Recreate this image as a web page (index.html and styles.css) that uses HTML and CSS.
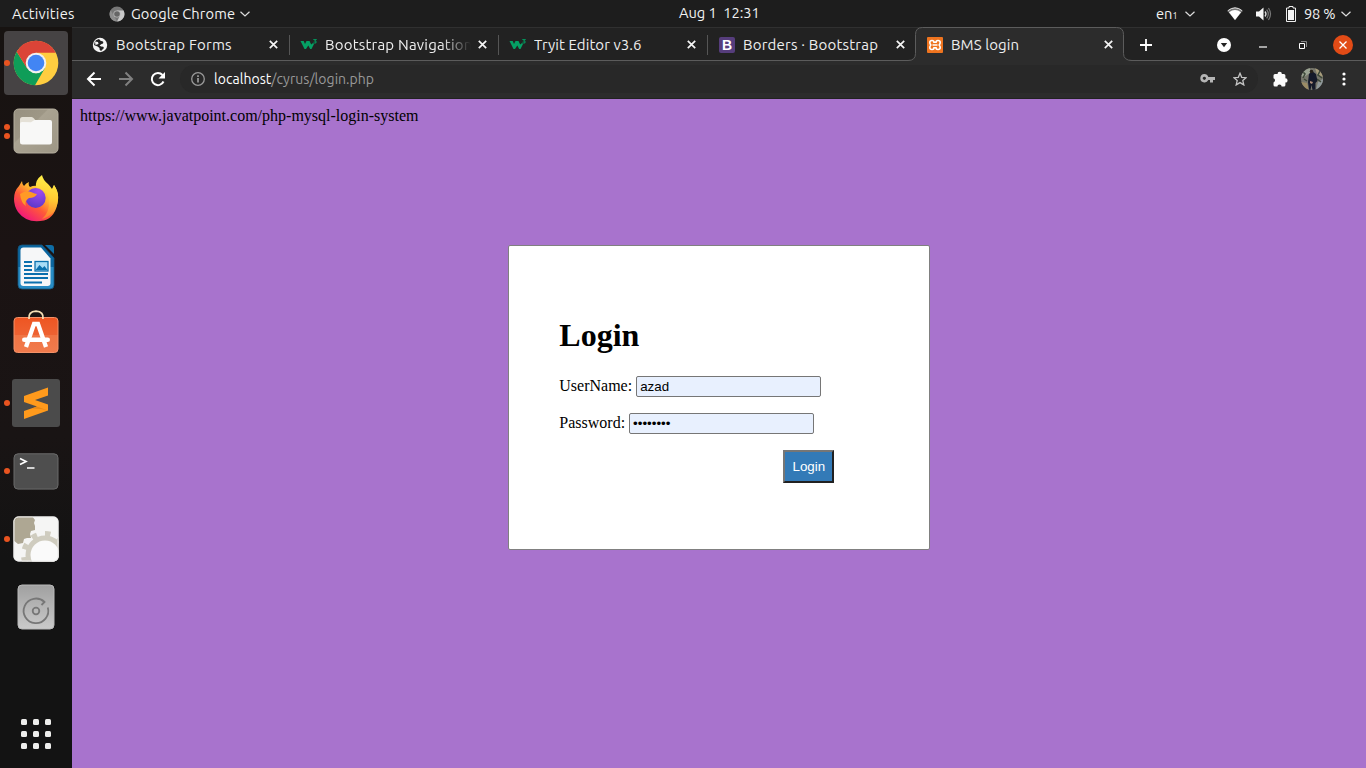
FILE: index.html
```html
<!DOCTYPE html>
<html lang="en">
<head>
<meta charset="utf-8">
<title>BMS login</title>
<link rel="stylesheet" href="styles.css">
</head>
<body>
<header class="topbar">
  <span class="activities">Activities</span>
  <svg class="app-icon" width="16" height="16" viewBox="0 0 16 16"><circle cx="8" cy="8" r="7.500" fill="#777"/><path d="M8 4.500h6.600A7.500 7.500 0 0 1 8 15.500l3-6z" fill="#c9c9c9"/><path d="M1.600 4.200 5 10l3 5.500A7.500 7.500 0 0 1 1.600 4.200z" fill="#8e8e8e"/><circle cx="8" cy="8" r="3.600" fill="#bbb"/><circle cx="8" cy="8" r="2.800" fill="#666"/></svg>
  <span class="app-name">Google Chrome</span>
  <svg class="chev" width="10" height="6" viewBox="0 0 10 6"><path d="M.5.700 5 5 9.500.7" fill="none" stroke="#ddd" stroke-width="1.200"/></svg>
  <span class="clock">Aug 1&nbsp; 12:31</span>
  <span class="lang">en<small>1</small></span>
  <svg class="chev chev-lang" width="10" height="6" viewBox="0 0 10 6"><path d="M.5.700 5 5 9.500.7" fill="none" stroke="#ddd" stroke-width="1.200"/></svg>
  <svg class="wifi" width="16" height="14" viewBox="0 0 16 14"><path d="M.5 4Q8-2.500 15.500 4L8 13.300z" fill="#777"/><path d="M2 5.300Q8 .8 14 5.300L8 13z" fill="#fff"/><path d="M.7 3.800Q8-2.200 15.300 3.800" stroke="#e8e8e8" fill="none"/></svg>
  <svg class="volume" width="16" height="14" viewBox="0 0 16 14"><path d="M0 4.500h3L7.500.5v13L3 9.500H0z" fill="#f5f5f5"/><path d="M9 4.500q2 2.500 0 5" stroke="#ddd" fill="none" stroke-width="1.300"/><path d="M10.700 2.700q3.200 4.300 0 8.600M12.500 1q4 6 0 12" stroke="#777" fill="none" stroke-width="1.200"/></svg>
  <svg class="battery" width="10" height="16" viewBox="0 0 10 16"><path d="M3 .5h4V2h2.500v13.500H.5V2H3z" fill="none" stroke="#eee"/><path d="M2 4h6v10H2z" fill="#f4f4f4"/></svg>
  <span class="percent">98 %</span>
  <svg class="chev chev-sys" width="10" height="6" viewBox="0 0 10 6"><path d="M.5.700 5 5 9.500.7" fill="none" stroke="#ddd" stroke-width="1.200"/></svg>
</header>

<div class="desktop">
<nav class="dock">
  <div class="slot slot-active"><i class="dots"><b></b></i>
    <svg width="46" height="46" viewBox="-23 -23 46 46"><circle r="22.300" fill="#ffcd40"/><path d="M-19.300-11.200-9 5 0 10.500 9 5-1 22.300A22.300 22.300 0 0 1-19.300-11.200z" fill="#0f9d58"/><path d="M-19.300-11.200-8.500 6 0-10.300H19.700A22.300 22.300 0 0 0-19.300-11.200z" fill="#db4437"/><circle r="10.300" fill="#f1f1f1"/><circle r="8.300" fill="#4285f4"/></svg></div>
  <div class="slot"><i class="dots"><b></b><b></b></i>
    <svg width="46" height="46" viewBox="0 0 46 46"><defs><linearGradient id="files" x2="1" y2="1"><stop stop-color="#979080"/><stop offset=".38" stop-color="#9e9786"/><stop offset=".4" stop-color="#aaa392"/><stop offset="1" stop-color="#9d9685"/></linearGradient></defs><rect x="1" y="1" width="44" height="44" rx="4.500" fill="url(#files)" stroke="#b5af9f"/><path d="M7 17v-5.500Q7 9 9.500 9h9q1.500 0 2.500 1.500l2 2.500v5z" fill="#e5e1d7"/><path d="M7 16q0-2 2-2l9 .3 3.500-2.300H37q2 0 2 2v20q0 2.500-2.500 2.500h-27Q7 36.500 7 34z" fill="#f8f8f7"/></svg></div>
  <div class="slot">
    <svg width="46" height="48" viewBox="0 0 46 48"><defs><linearGradient id="fox" x1=".85" y1=".1" x2=".2" y2=".9"><stop stop-color="#fff04a"/><stop offset=".35" stop-color="#ffb52e"/><stop offset=".62" stop-color="#ff5a38"/><stop offset="1" stop-color="#f0187a"/></linearGradient><linearGradient id="flame" x1=".6" y1="0" x2=".5" y2="1"><stop stop-color="#fff24a"/><stop offset=".55" stop-color="#ffc932"/><stop offset="1" stop-color="#ff7a30"/></linearGradient><radialGradient id="globe" cx=".65" cy=".15" r=".9"><stop stop-color="#a24cf0"/><stop offset="1" stop-color="#5a38c8"/></radialGradient></defs><path d="M1 24Q1 16 6 11l3-5q0 3 2 5 2-3 5-4-1 3 1 5 4-2 8-1 8 0 13 7l3-8q5 7 4 15Q43 42 31 45.500 14 49 5 37 1 31 1 24z" fill="url(#fox)"/><path d="M23 12Q22 5 29 0q1 5 6 9 2 2 4 5l2-4q5 8 4 15-2 15-16 19 8-7 7-19-1-9-9-11z" fill="url(#flame)"/><circle cx="22.700" cy="23" r="10" fill="url(#globe)"/><path d="M7 19q6-4 11-2 4 2 6 2-2 4-8 4-5 3-3 8-5-3-6-12z" fill="#ff9a26"/></svg></div>
  <div class="slot">
    <svg width="38" height="46" viewBox="0 0 38 46"><defs><linearGradient id="doc" x2="0" y2="1"><stop offset=".5" stop-color="#0b66a0"/><stop offset=".5" stop-color="#278bc4"/></linearGradient></defs><path d="M5 1h20l12 13v27q0 4-4 4H5q-4 0-4-4V5q0-4 4-4z" fill="url(#doc)" stroke="#155379" stroke-width=".8"/><path d="M28 1h6q3 0 3 3v6z" fill="#0e6da6"/><path d="M6.500 3.500H24l9.500 11V39q0 3-3 3h-24q-3 0-3-3V6.500q0-3 3-3z" fill="#f6f7f8"/><path d="M7 18h8M7 22h8M7 26h8M7 30h24M7 34h24M7 38.500h18" stroke="#0b70ae" stroke-width="1.800"/><rect x="18" y="17.500" width="13" height="9.500" fill="#a9dcf7" stroke="#0b70ae" stroke-width="1.300"/><path d="m18.500 26 4-5 3 3 2-2 3 4z" fill="#0b70ae"/></svg></div>
  <div class="slot">
    <svg class="store" width="46" height="46" viewBox="0 0 46 46"><defs><linearGradient id="bag" x2="0" y2="1"><stop stop-color="#ee5522"/><stop offset=".49" stop-color="#ee6232"/><stop offset=".51" stop-color="#f07444"/><stop offset="1" stop-color="#f17b4d"/></linearGradient></defs><rect x="1" y="8.500" width="44" height="35" rx="3.500" fill="url(#bag)" stroke="#f49168"/><path d="M16 10q-1-7.500 7-7.800Q31 2.500 30 10" fill="none" stroke="#f6dfb5" stroke-width="1.800"/><path d="m13 38 8-23h4l8 23" fill="none" stroke="#fff" stroke-width="4.300"/><rect x="9" y="28.500" width="28" height="4.600" rx="2.300" fill="#fff"/></svg></div>
  <div class="slot"><i class="dots"><b></b></i>
    <svg width="48" height="48" viewBox="0 0 48 48"><rect width="48" height="48" rx="3" fill="#4b4b4b"/><path d="M12 17 36 8.500v8L23 21l13 4.500v6L12 40v-8l13-4.500L12 23z" fill="#ff9a1c"/><path d="m12 23 24 8.500-7-1.500-9-.5 5-2z" fill="#e88716"/></svg></div>
  <div class="slot"><i class="dots"><b></b></i>
    <svg width="46" height="37" viewBox="0 0 46 37"><rect x="1" y=".8" width="44" height="35.300" rx="4" fill="#4e4e4e" stroke="#6a6a6a"/><path d="m7 5.500 6 3-6 3M14 15h7.500" fill="none" stroke="#fff" stroke-width="1.700"/></svg></div>
  <div class="slot"><i class="dots"><b></b></i>
    <svg width="46" height="46" viewBox="0 0 46 46"><defs><clipPath id="tile"><rect x=".5" y=".5" width="45" height="45" rx="5"/></clipPath></defs><g clip-path="url(#tile)"><path d="M0 0h46v46H0z" fill="#f5f5f4"/><path d="M0 0h19l3 4-1 3 1 3 0 4-4 1-1 3 1 4-4 0-3 1-1 4-5 1-5-4z" fill="#aea793"/><circle cx="32" cy="39" r="19.500" fill="#cfccbf"/><circle cx="32" cy="39" r="21" fill="none" stroke="#cfccbf" stroke-width="6" stroke-dasharray="5.500 8" stroke-dashoffset="-3.800"/><circle cx="32" cy="39" r="14.500" fill="#fafafa"/></g><rect x="1" y="1" width="44" height="44" rx="4.500" fill="none" stroke="#eee"/></svg></div>
  <div class="slot">
    <svg width="38" height="46" viewBox="0 0 38 46"><defs><linearGradient id="disk" x2="0" y2="1"><stop stop-color="#a0a0a0"/><stop offset="1" stop-color="#cacaca"/></linearGradient></defs><rect x="1" y="1" width="36" height="44" rx="4" fill="url(#disk)" stroke="#b9b9b9"/><path d="M30.800 23.500A12.300 12.300 0 1 1 27.500 18L24.500 21" fill="none" stroke="#777" stroke-width="1.800"/><circle cx="19" cy="27" r="3.300" fill="none" stroke="#777" stroke-width="1.800"/></svg></div>
  <div class="apps"><b></b><b></b><b></b><b></b><b></b><b></b><b></b><b></b><b></b></div>
</nav>

<section class="browser">
  <div class="tabs">
    <div class="tab tab-first">
      <svg width="16" height="16" viewBox="0 0 16 16"><circle cx="8" cy="8" r="7.200" fill="#f5f5f5"/><path d="M7 2q1 2 4 2.500 1 2-1.500 2.500L7.500 8.500Q9 10 11 9.500L12 11 9 14Q7 13 7.500 11 6 9 3 8.500L2 8Q2 5 4 3.200z" fill="#222"/><path d="m3 4.500 3 .5.5 2-3 1z" fill="#f5f5f5"/></svg>
      <span class="title t1">Bootstrap Forms</span><svg class="x" width="9" height="9" viewBox="0 0 9 9"><path d="m.8.8 7.400 7.400m0-7.400L.8 8.200"/></svg>
    </div>
    <div class="tab">
      <svg class="w3" width="17" height="16" viewBox="0 0 17 16"><path d="M.5 4h3.200l1.300 3L6.500 4h3l1.700 3.500L13 6l1 1-2.500 5h-1.300L8.300 8.500 6 12H4.500z" fill="#05a064"/><path d="M13.300 2.500h2.700l-1.300 1.500q1.700 0 1.300 1.400-.6 1-2.600.5" fill="none" stroke="#04915a" stroke-width="1.100"/></svg>
      <span class="title t2 fade">Bootstrap Navigation</span><svg class="x" width="9" height="9" viewBox="0 0 9 9"><path d="m.8.8 7.400 7.400m0-7.400L.8 8.200"/></svg>
    </div>
    <div class="tab">
      <svg class="w3" width="17" height="16" viewBox="0 0 17 16"><path d="M.5 4h3.200l1.300 3L6.500 4h3l1.700 3.500L13 6l1 1-2.500 5h-1.300L8.300 8.500 6 12H4.500z" fill="#05a064"/><path d="M13.300 2.500h2.700l-1.300 1.500q1.700 0 1.300 1.400-.6 1-2.600.5" fill="none" stroke="#04915a" stroke-width="1.100"/></svg>
      <span class="title t3">Tryit Editor v3.6</span><svg class="x" width="9" height="9" viewBox="0 0 9 9"><path d="m.8.8 7.400 7.400m0-7.400L.8 8.200"/></svg>
    </div>
    <div class="tab tab-last">
      <span class="bs">B</span>
      <span class="title t4">Borders · Bootstrap</span><svg class="x" width="9" height="9" viewBox="0 0 9 9"><path d="m.8.8 7.400 7.400m0-7.400L.8 8.200"/></svg>
    </div>
    <div class="tab tab-active">
      <svg class="shape" width="224" height="34" viewBox="0 0 224 34"><path d="M0 34v-.5q7.500 0 7.500-7V7.500q0-7 7-7h194q7 0 7 7v19q0 7 7.500 7v.5z" fill="#2c2c2c"/><path d="M0 33.500q7.500 0 7.500-7V7.500q0-7 7-7h194q7 0 7 7v19q0 7 8.500 7" fill="none" stroke="#5c5c5c"/></svg>
      <svg width="16" height="16" viewBox="0 0 16 16"><rect width="16" height="16" rx="1" fill="#ef741f"/><path d="M5 3.500q2 0 2 1.700h2q0-1.700 2-1.700 2.200 0 2.200 2 0 1.300-1 2.500 1 1.200 1 2.500 0 2-2.200 2-2 0-2-1.700H7q0 1.700-2 1.700-2.200 0-2.200-2 0-1.300 1-2.500-1-1.200-1-2.500 0-2 2.200-2zM5.500 8h5" fill="none" stroke="#fff" stroke-width="1.600"/></svg>
      <span class="title t5">BMS login</span><svg class="x" width="9" height="9" viewBox="0 0 9 9"><path d="m.8.8 7.400 7.400m0-7.400L.8 8.200"/></svg>
    </div>
    <svg class="plus" width="12" height="12" viewBox="0 0 12 12"><path d="M6 0v12M0 6h12" stroke="#fff" stroke-width="1.800"/></svg>
    <svg class="search-tabs" width="14" height="14" viewBox="0 0 14 14"><circle cx="7" cy="7" r="7" fill="#fff"/><path d="M3.800 5h6.400L7 9.300z" fill="#222"/></svg>
    <svg class="min" width="8" height="2" viewBox="0 0 8 2"><path d="M0 1h8" stroke="#fff" stroke-width="1.200"/></svg>
    <svg class="restore" width="8" height="8" viewBox="0 0 8 8"><path d="M.5 2.500h5v5h-5z" fill="none" stroke="#fff"/><path d="M2 .5h5.500V6" fill="none" stroke="#888"/></svg>
    <svg class="quit" width="20" height="20" viewBox="0 0 20 20"><circle cx="10" cy="10" r="10" fill="#e24b16"/><path d="m6.500 6.500 7 7m0-7-7 7" stroke="#fff" stroke-width="1.300"/></svg>
  </div>

  <div class="toolbar">
    <svg width="16" height="16" viewBox="0 0 16 16"><path d="M15 8H2m6.500-6.500L2 8l6.500 6.500" fill="none" stroke="#fff" stroke-width="2"/></svg>
    <svg width="16" height="16" viewBox="0 0 16 16"><path d="M1 8h13M7.500 1.500 14 8l-6.500 6.500" fill="none" stroke="#808080" stroke-width="2"/></svg>
    <svg width="16" height="16" viewBox="0 0 16 16"><path d="M13.500 10.500A6.100 6.100 0 1 1 12.500 4" fill="none" stroke="#fff" stroke-width="2"/><path d="M15 1v6.500H8.500z" fill="#fff"/></svg>
    <div class="address">
      <svg width="14" height="14" viewBox="0 0 14 14"><circle cx="7" cy="7" r="6.300" fill="none" stroke="#999" stroke-width="1.300"/><path d="M7 6v4.500M7 3.300V5" stroke="#aaa" stroke-width="1.500"/></svg>
      <span class="url">localhost<em>/cyrus/login.php</em></span>
      <svg class="key" width="15" height="9" viewBox="0 0 15 9"><path d="M4.300 0a4.200 4.200 0 0 1 4 3H15v3h-2v2.500h-3V6H8.300a4.200 4.200 0 1 1-4-6zm0 2.700a1.600 1.600 0 1 0 .1 0z" fill="#b5b5b5"/></svg>
      <svg width="14" height="14" viewBox="0 0 14 14"><path d="m7 1.300 1.700 4 4.400.4-3.300 2.900 1 4.300L7 10.600l-3.800 2.300 1-4.300L.9 5.700l4.400-.4z" fill="none" stroke="#c5c5c5" stroke-width="1.300"/></svg>
    </div>
    <svg class="puzzle" width="16" height="16" viewBox="0 0 16 16"><path d="M1.500 4.500Q1.500 3 3 3h2.500a2.200 2.200 0 0 1 4.400 0h2q1.500 0 1.500 1.500v2.700a2.200 2.200 0 0 1 0 4.400V14q0 1.500-1.500 1.500H9.600a2.100 2.100 0 0 0-4.200 0H3Q1.500 15.500 1.500 14v-2.600a2.200 2.200 0 0 0 0-4.200z" fill="#fafafa"/></svg>
    <svg class="avatar" width="22" height="22" viewBox="0 0 22 22"><defs><clipPath id="face"><circle cx="11" cy="11" r="11"/></clipPath></defs><g clip-path="url(#face)"><path d="M0 0h22v22H0z" fill="#76766b"/><path d="M0 0h9v5L3 9 0 8z" fill="#9aa392"/><path d="m14 0 8 0v9l-6-3z" fill="#a89d7b"/><path d="m0 14 6 1 2 7H0z" fill="#9a8b65"/><path d="m17 14 5-3v11h-7z" fill="#8f989a"/><path d="m1 3 3 3-2 4m17-7-2 4 4 3M3 11l3 2m10-2 4 3" stroke="#3d4838" fill="none" stroke-width="1.500"/><path d="m8 6 3-3 4 3 1.500 7-2 2V22h-3l-1-5-1 5H8l-1-8z" fill="#151a2a"/><circle cx="10.500" cy="3.500" r="1.800" fill="#272119"/><path d="m9 13 3 1-1 2-2-1z" fill="#ae8e7c"/></g></svg>
    <svg width="4" height="14" viewBox="0 0 4 14"><g fill="#fff"><circle cx="2" cy="2" r="1.600"/><circle cx="2" cy="7" r="1.600"/><circle cx="2" cy="12" r="1.600"/></g></svg>
  </div>

  <main class="page">
    <div class="note">https://www.javatpoint.com/php-mysql-login-system</div>
    <form class="card">
      <h1>Login</h1>
      <p><label for="user">UserName: </label><input id="user" type="text" value="azad"></p>
      <p><label for="pass">Password: </label><input id="pass" type="password" value="password"></p>
      <p class="submit"><button type="button">Login</button></p>
    </form>
  </main>
</section>
</div>
</body>
</html>
```

FILE: styles.css
```css
* { box-sizing: border-box; }
body { margin: 0; width: 1366px; height: 768px; overflow: hidden; background: #1d1d1d; font-family: Ubuntu, "Noto Sans", sans-serif; }
svg { display: block; flex: none; }

.topbar { display: flex; align-items: center; height: 27px; background: #1d1d1d; color: #f2f2f2; font-size: 14.667px; line-height: 26px; white-space: nowrap; }
.topbar span { flex: none; }
.activities { width: 97px; padding: 0 0 0 12px; letter-spacing: .25px; }
.app-icon { margin: 0 6px 0 12px; }
.app-name { width: 109px; letter-spacing: .1px; }
.clock { width: 477px; margin-left: 429px; padding-bottom: 1px; letter-spacing: -.05px; }
.lang { width: 28px; padding-top: 1px; }
.lang small { font-size: 9px; line-height: 1; }
.chev-lang { margin-left: 1px; }
.wifi { margin-left: 32px; }
.volume { margin-left: 13px; }
.battery { margin-left: 14px; }
.percent { width: 37px; margin-left: 8px; letter-spacing: -.2px; }

.desktop { display: flex; height: 741px; }
.dock { display: flex; flex-direction: column; align-items: center; gap: 4px; width: 72px; padding-top: 4px; background: linear-gradient(#171311, #1b1313 30%, #191414 55%, #131313 72%); }
.slot { display: flex; align-items: center; justify-content: center; position: relative; flex: none; width: 64px; height: 64px; border-radius: 4px; }
.slot-active { background: #464344; }
.store { margin-top: -6px; }
.dots { display: flex; flex-direction: column; justify-content: center; gap: 3px; position: absolute; left: 0; top: 0; height: 64px; }
.dots b { width: 6px; height: 6px; border-radius: 50%; background: #e95420; }
.apps { display: grid; grid-template-columns: repeat(3, 6px); gap: 6px; margin-top: 76px; }
.apps b { width: 6px; height: 6px; border-radius: 1.5px; background: #eeeeec; }

.browser { display: flex; flex-direction: column; width: 1294px; }
.tabs { display: flex; align-items: center; height: 34px; padding-left: 9px; background: #222; border-top: 1px solid #303030; box-shadow: inset 0 -1px #5c5c5c; }
.tab { display: flex; align-items: center; position: relative; flex: none; width: 209px; height: 20px; padding-left: 11px; border-right: 1px solid #555; }
.tab-last { width: 208px; border-right-color: transparent; }
.tab-active { border-right: 0; padding-left: 11px; }
.tab > svg, .tab > span { position: relative; }
.tab > .shape { position: absolute; left: -8px; top: -8px; }
.title { width: 153px; margin-left: 8px; overflow: hidden; white-space: nowrap; font-size: 15px; line-height: 22px; color: #eee; }
.t1, .t4 { letter-spacing: .2px; }
.t2 { letter-spacing: .2px; }
.t3, .t5 { letter-spacing: .07px; }
.tab > .w3 { margin-left: -1px; }
.fade { width: 146px; margin-right: 7px; -webkit-mask-image: linear-gradient(90deg, #000 80%, transparent); mask-image: linear-gradient(90deg, #000 80%, transparent); }
.x { fill: none; stroke: #f5f5f5; stroke-width: 1.7; }
.plus { margin-left: 15px; }
.bs { width: 16px; height: 16px; border-radius: 2px; background: #563d7c; color: #fff; font: bold 14px/16px "Liberation Sans", sans-serif; text-align: center; }
.search-tabs { margin-left: 65px; }
.min { margin: 4px 0 0 28px; }
.restore { margin-left: 32px; }
.quit { margin-left: 26px; }

.toolbar { display: flex; align-items: center; gap: 16px; height: 38px; padding: 0 0 2px 14px; background: #2c2c2c; border-bottom: 1px solid #222; }
.address { display: flex; align-items: center; width: 1078px; height: 28px; margin-left: -2px; padding: 0 11px; border-radius: 14px; background: #282828; font-size: 14px; }
.url { width: 986px; margin-left: 9px; color: #fff; white-space: nowrap; letter-spacing: .04px; }
.url em { font-style: normal; color: #999; }
.key { margin-right: 18px; }
.puzzle { margin-left: -2px; }
.avatar { margin-left: -3px; margin-right: 3px; }

.page { flex: 1; padding: 8px; background: #a873cd; color: #000; font: 16px/normal "Liberation Serif", serif; }
.card { width: 422px; height: 305px; margin: 120px 0 0 428.3px; padding: 50px; border: 1px solid #808080; border-radius: 2px; background: #fff; }
.card h1 { margin: 21.44px 0; font-size: 32px; }
.card p { margin: 16px 0; }
.card input { width: 185px; height: 21px; padding: 1px 3px; border: 1px solid #767676; border-radius: 2px; background: #e8f0fe; color: #000; font: 13.333px "Liberation Sans", sans-serif; }
.card .submit { padding-left: 224px; }
.card button { width: 51px; height: 33px; padding: 5px; border: 2px solid; border-color: #767676 #212121 #212121 #767676; background: #337ab7; color: #fff; font: 13.333px "Liberation Sans", sans-serif; }
```
